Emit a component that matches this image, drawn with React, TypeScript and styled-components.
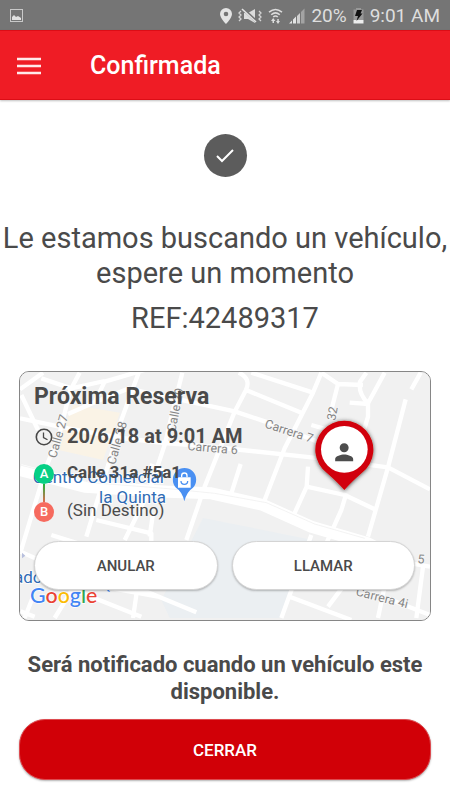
import React from "react";
import styled, { createGlobalStyle } from "styled-components";

const GlobalStyle = createGlobalStyle`
  * { box-sizing: border-box; }
  body {
    margin: 0;
    background: #ffffff;
    color: #4a4a4a;
    font-family: Roboto, "Liberation Sans", sans-serif;
  }
  h1, h2, p, ul { margin: 0; padding: 0; }
  button { font-family: inherit; cursor: pointer; }
`;

const StatusBar = styled.div`
  display: flex;
  align-items: center;
  justify-content: space-between;
  height: 30px;
  padding: 1px 10px 0;
  background: #757575;
  color: #dedede;
  font-size: 19px;
  line-height: 29px;
`;

const StatusGroup = styled.div`
  display: flex;
  align-items: center;
  gap: 6px;
`;

const AppBar = styled.header`
  display: flex;
  align-items: center;
  gap: 49px;
  height: 70px;
  padding: 2px 17px 0;
  background: #ef1c25;
  border-top: 1px solid #dc0d16;
  border-bottom: 1px solid #dc0d16;
  box-shadow: 0 1px 2px rgba(0, 0, 0, 0.25);
`;

const MenuButton = styled.button`
  display: flex;
  padding: 0;
  border: 0;
  background: none;
`;

const Title = styled.h1`
  color: #ffffff;
  font-size: 25px;
  font-weight: 500;
  line-height: 32px;
`;

const Content = styled.main`
  display: flex;
  flex-direction: column;
  padding: 34px 0 20px;
`;

const DoneBadge = styled.div`
  display: flex;
  align-items: center;
  justify-content: center;
  align-self: center;
  width: 43px;
  height: 43px;
  border-radius: 50%;
  background: #5c5c5c;
`;

const Headline = styled.p`
  margin-top: 44px;
  font-size: 29px;
  line-height: 35px;
  text-align: center;
`;

const Reference = styled.p`
  margin-top: 10px;
  font-size: 29px;
  line-height: 35px;
  text-align: center;
`;

const Card = styled.section`
  position: relative;
  margin: 35px 19px 0;
  padding: 11px 15px 30px 14px;
  overflow: hidden;
  border: 1px solid #868686;
  border-radius: 10px;
  background: #f1f1f1;
`;

const MapLayer = styled.svg`
  position: absolute;
  inset: 0;
  width: 100%;
  height: 100%;
`;

const CardBody = styled.div`
  position: relative;
`;

const CardTitle = styled.h2`
  font-size: 23px;
  font-weight: 700;
  line-height: 28px;
`;

const Row = styled.div`
  display: flex;
  align-items: center;
  gap: 13px;
  line-height: 20px;
`;

const DateRow = styled(Row)`
  margin-top: 15px;
  font-size: 20px;
  font-weight: 700;
`;

const Stops = styled.div`
  margin-top: 18px;
  font-size: 17px;
`;

const StopName = styled.span<{ $strong?: boolean }>`
  padding-bottom: 3px;
  line-height: 17px;
  font-weight: ${(p) => (p.$strong ? 700 : 400)};
`;

const Marker = styled.span<{ $color: string }>`
  width: 20px;
  height: 20px;
  border-radius: 50%;
  background: ${(p) => p.$color};
  color: #ffffff;
  font-size: 13px;
  font-weight: 500;
  line-height: 20px;
  text-align: center;
`;

const Connector = styled.div`
  width: 2px;
  height: 18px;
  margin-left: 9px;
  background: linear-gradient(#1fb33c, #e2694f);
`;

const Actions = styled.div`
  display: grid;
  grid-template-columns: 1fr 1fr;
  gap: 14px;
  margin-top: 19px;
`;

const PillButton = styled.button`
  height: 49px;
  border: 1px solid #d4d4d4;
  border-radius: 25px;
  background: #ffffff;
  box-shadow: 0 1px 2px rgba(0, 0, 0, 0.25);
  color: #4a4a4a;
  font-size: 15px;
  font-weight: 500;
`;

const Notice = styled.p`
  margin: 30px 19px 0;
  font-size: 22px;
  font-weight: 700;
  line-height: 27px;
  text-align: center;
`;

const CloseButton = styled.button`
  height: 61px;
  margin: 14px 19px 0;
  border: 1px solid #dd4a4f;
  border-radius: 26px;
  background: #d10007;
  box-shadow: 0 1px 2px rgba(0, 0, 0, 0.3);
  color: #ffffff;
  font-size: 17px;
  font-weight: 500;
`;

const PictureIcon = () => (
  <svg width="13" height="13" viewBox="0 0 13 13" aria-hidden="true">
    <rect x="0.5" y="0.5" width="12" height="12" fill="none" stroke="#c9c9c9" />
    <path d="M2 11V8l2-2 2 2 2-1 3 2v2z" fill="#e2e2e2" />
  </svg>
);

const PlaceIcon = () => (
  <svg width="12" height="16" viewBox="0 0 12 16" aria-hidden="true">
    <path
      fillRule="evenodd"
      fill="#e4e4e4"
      d="M6 0a6 6 0 0 0-6 6c0 4 6 10 6 10s6-6 6-10a6 6 0 0 0-6-6zm0 3.700a2.300 2.300 0 1 1 0 4.600 2.300 2.300 0 0 1 0-4.600z"
    />
  </svg>
);

const MuteIcon = () => (
  <svg width="24" height="16" viewBox="0 0 24 16" aria-hidden="true">
    <path d="M6 5h4l7-4v14l-7-4H6z" fill="#dcdcdc" />
    <path d="M5 1l14 13" stroke="#757575" strokeWidth="3" />
    <path d="M4 1l14 13" stroke="#e2e2e2" strokeWidth="1.6" />
    <path
      d="M3 3L1 5l2 2-2 2 2 2-2 2M21 3l2 2-2 2 2 2-2 2 2 2"
      fill="none"
      stroke="#d4d4d4"
      strokeWidth="1.3"
    />
  </svg>
);

const WifiIcon = () => (
  <svg width="15" height="16" viewBox="0 0 15 16" aria-hidden="true">
    <g fill="none" stroke="#dcdcdc" strokeWidth="1.5">
      <path d="M1 4.200Q7.500-1.200 14 4.200" />
      <path d="M3.200 6.800Q7.500 3 11.800 6.800" />
      <path d="M5.200 9Q7.500 7 9.800 9" />
    </g>
    <path d="M3 13l2.200-3 2.200 3h-1.400v2H4.500v-2zM8 13h1.300v-2h1.500v2H12l-2 3z" fill="#dcdcdc" />
  </svg>
);

const SignalIcon = () => (
  <svg width="16" height="16" viewBox="0 0 16 16" aria-hidden="true">
    <path d="M0 15.500h3v-3zM4 15.500h3v-7l-3 3z" fill="#e4e4e4" />
    <path d="M8 15.500h3V5L8 8z" fill="#d0d0d0" />
    <path d="M12 15.500h3.500V0.500L12 4z" fill="#a3a3a3" />
  </svg>
);

const BatteryIcon = () => (
  <svg width="11" height="17" viewBox="0 0 11 17" aria-hidden="true">
    <path d="M3 1h5v1.500h2.500V13H.5V2.500H3z" fill="#989898" />
    <path d="M.5 13h10v3.500H.5z" fill="#ededed" />
    <path d="M4 3h5L7.500 6.500H9.500L3.500 14 5 9H2z" fill="#111111" />
  </svg>
);

const ClockIcon = () => (
  <svg width="20" height="20" viewBox="0 0 20 20" aria-hidden="true">
    <g transform="translate(0 1)" fill="none" stroke="#474747" strokeWidth="1.600">
      <circle cx="10" cy="10" r="7.700" />
      <path d="M9.500 5.500v5l4 2.300" strokeWidth="1.300" />
    </g>
  </svg>
);

const CityMap = () => (
  <MapLayer viewBox="6 6 1230 744" preserveAspectRatio="xMidYMid slice" role="img" aria-label="Mapa">
    <defs>
      <filter id="pinShadow" x="-20%" y="-20%" width="140%" height="140%">
        <feDropShadow dx="0" dy="2" stdDeviation="6" floodColor="#000000" floodOpacity="0.7" />
      </filter>
    </defs>
    <rect x="6" y="6" width="1230" height="744" fill="#f1f1f1" />
    <path d="M165 104L306 128 255 270 112 238z" fill="#faf3e6" />
    <path d="M555 444L885 510 785 744H455L430 690z" fill="#ebeff2" />

    <g fill="none" stroke="#ffffff" strokeWidth="13" strokeLinejoin="round">
      <path d="M6 58L75 8" />
      <path d="M185 8L160 55 70 25" />
      <path d="M10 75L60 180" />
      <path d="M6 145L150 175 310 204 440 219 560 228 880 262 1110 292 1236 358" />
      <path d="M160 48L125 190 85 290 8 545" />
      <path d="M150 132L230 97 330 56 500 92 650 124 740 154 900 215" />
      <path d="M230 97L260 35 380 0M160 55L260 33" />
      <path d="M362 8L310 150 275 270 205 500" />
      <path d="M493 8L470 100 440 225 395 360 320 510" />
      <path d="M662 8Q700 25 684 60L650 125 560 350 505 510" />
      <path d="M684 60L850 128M700 8L885 68" />
      <path d="M910 8L885 68 800 235 740 390" />
      <path d="M910 8L960 42 935 140M960 42L1035 45M1050 100V140L1035 190M880 165L950 185" />
      <path d="M1100 8L1050 100Q1020 70 1026 35L1045 8M995 98L1052 102" />
      <path d="M1208 8L1180 58M1163 88L1110 292 1050 500" />
      <path d="M870 290L866 350 825 440M866 350L980 375 1075 420" />
      <path d="M668 282L640 370M395 285L445 305" />
      <path d="M985 370L970 420 925 520" />
      <path d="M235 450L400 490V515M405 430L395 500M100 495L180 520" />
      <path d="M8 545L130 600M45 620L155 655 370 740M165 655L110 744M20 744L45 680M360 640L345 744" />
      <path d="M350 650L535 727M8 724L50 740M255 650L420 680" />
      <path d="M880 495L790 744M815 680L1000 750M975 650L930 710M1110 600L1080 744M1120 690L1236 735M1060 560L1236 590M1215 590L1195 744" />
    </g>

    <g fill="none" strokeLinejoin="round">
      <path d="M6 300L200 350 450 365 580 370 735 405 880 470 1050 520 1110 550" stroke="#ffffff" strokeWidth="36" />
      <path d="M6 285L220 338 450 356 590 370 745 398 890 462 1040 505" stroke="#ededed" strokeWidth="2" />
    </g>

    <path d="M12 548l10 9-10 8z" fill="#b7bfdd" />
    <path d="M265 650l12 16-8-2z" fill="#4285f4" />

    <g fill="#858585" fontSize="37" stroke="#f7f7f7" strokeWidth="5" paintOrder="stroke">
      <text transform="translate(114 266) rotate(-74)">Calle 27</text>
      <text transform="translate(291 286) rotate(-74)">Calle 28</text>
      <text transform="translate(472 187) rotate(-79)">Calle 29</text>
      <text transform="translate(738 172) rotate(18)">Carrera 7</text>
      <text transform="translate(508 240) rotate(5)">Carrera 6</text>
      <text transform="translate(952 153) rotate(-80)">32</text>
      <text transform="translate(1012 676) rotate(14)">Carrera 4i</text>
      <text transform="translate(1198 579) rotate(5)">5</text>
    </g>

    <g fill="#2f6bb5" fontSize="51" stroke="#ffffff" strokeWidth="5" paintOrder="stroke">
      <text x="44" y="340">Centro Comercial</text>
      <text x="243" y="400">la Quinta</text>
      <text x="-12" y="640">ado</text>
    </g>

    <g>
      <path d="M499 394Q493 365 474 353A35 35 0 1 1 525 353Q506 365 499 394z" fill="#4a90f2" />
      <path d="M480 322h38v31h-38z" fill="#ffffff" />
      <path d="M491 322v-5a8 8 0 0 1 16 0v5" fill="none" stroke="#ffffff" strokeWidth="4" />
      <path d="M489 333a10 10 0 0 0 20 0" fill="none" stroke="#4a90f2" strokeWidth="4" />
    </g>

    <text
      x="36"
      y="698"
      fontFamily="Lato, sans-serif"
      fontSize="64"
      fontWeight="500"
      stroke="#ffffff"
      strokeWidth="4"
      paintOrder="stroke"
    >
      <tspan fill="#4285f4">G</tspan>
      <tspan fill="#ea4335">o</tspan>
      <tspan fill="#fbbc05">o</tspan>
      <tspan fill="#4285f4">g</tspan>
      <tspan fill="#34a853">l</tspan>
      <tspan fill="#ea4335">e</tspan>
    </text>

    <g>
      <path
        d="M979 360Q960 338 927 309A87 87 0 1 1 1031 309Q998 338 979 360z"
        fill="#d10007"
        filter="url(#pinShadow)"
      />
      <circle cx="979" cy="238" r="70" fill="#ffffff" />
      <path
        transform="translate(938 206) scale(3.375)"
        fill="#4d4d4d"
        d="M12 12c2.210 0 4-1.790 4-4s-1.790-4-4-4-4 1.790-4 4 1.790 4 4 4zm0 2c-2.670 0-8 1.340-8 4v2h16v-2c0-2.660-5.330-4-8-4z"
      />
    </g>
  </MapLayer>
);

export default function App() {
  return (
    <>
      <GlobalStyle />
      <StatusBar>
        <PictureIcon />
        <StatusGroup>
          <PlaceIcon />
          <MuteIcon />
          <WifiIcon />
          <SignalIcon />
          <span>20%</span>
          <BatteryIcon />
          <time>9:01 AM</time>
        </StatusGroup>
      </StatusBar>

      <AppBar>
        <MenuButton type="button" aria-label="Menú">
          <svg width="24" height="18" viewBox="0 0 24 18" aria-hidden="true">
            <path d="M0 2h24M0 9h24M0 16h24" stroke="#ffe9ea" strokeWidth="2.500" />
          </svg>
        </MenuButton>
        <Title>Confirmada</Title>
      </AppBar>

      <Content>
        <DoneBadge>
          <svg width="18" height="14" viewBox="0 0 18 14" aria-hidden="true">
            <path d="M1 7l5 5L17 1" fill="none" stroke="#ffffff" strokeWidth="2" />
          </svg>
        </DoneBadge>
        <Headline>Le estamos buscando un vehículo, espere un momento</Headline>
        <Reference>REF:42489317</Reference>

        <Card>
          <CityMap />
          <CardBody>
            <CardTitle>Próxima Reserva</CardTitle>
            <DateRow>
              <ClockIcon />
              <span>20/6/18 at 9:01 AM</span>
            </DateRow>
            <Stops>
              <Row>
                <Marker $color="#06d085">A</Marker>
                <StopName $strong>Calle 31a #5a1</StopName>
              </Row>
              <Connector />
              <Row>
                <Marker $color="#f66a5e">B</Marker>
                <StopName>(Sin Destino)</StopName>
              </Row>
            </Stops>
            <Actions>
              <PillButton type="button">ANULAR</PillButton>
              <PillButton type="button">LLAMAR</PillButton>
            </Actions>
          </CardBody>
        </Card>

        <Notice>Será notificado cuando un vehículo este disponible.</Notice>
        <CloseButton type="button">CERRAR</CloseButton>
      </Content>
    </>
  );
}
